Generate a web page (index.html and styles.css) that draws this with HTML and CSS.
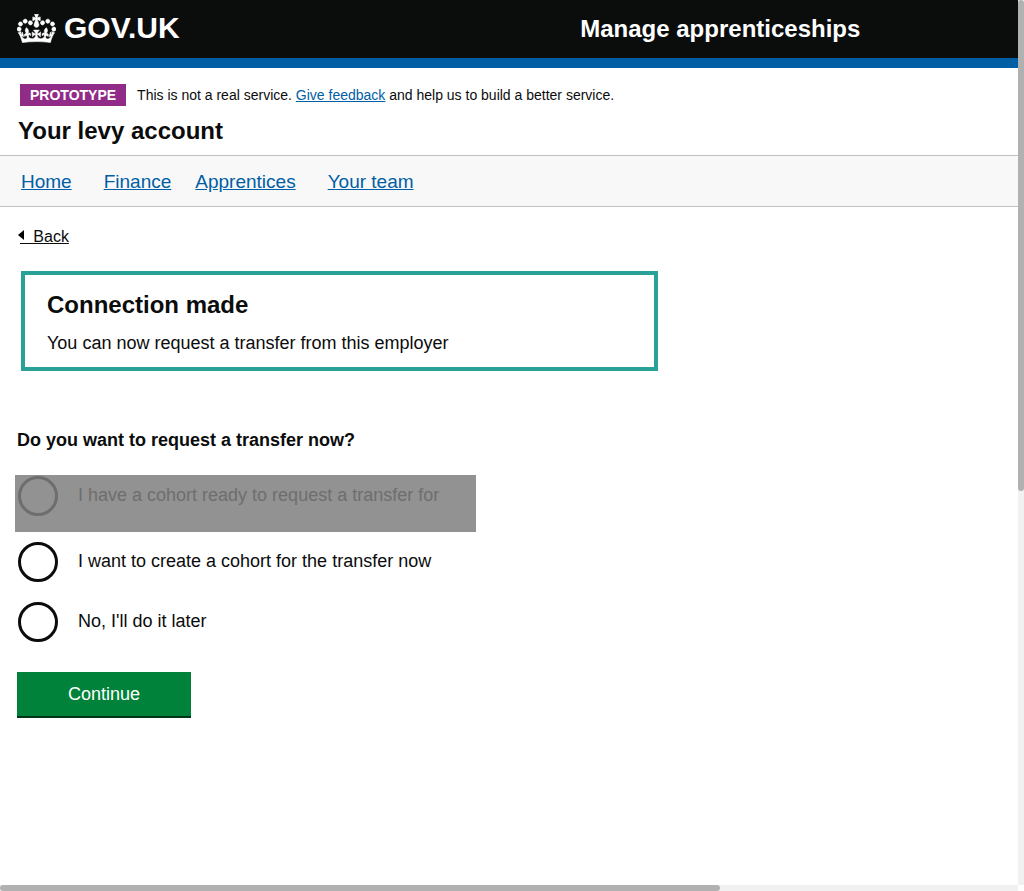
FILE: index.html
```html
<!DOCTYPE html>
<html lang="en">
<head>
<meta charset="utf-8">
<meta name="viewport" content="width=device-width, initial-scale=1">
<title>Connection made - Manage apprenticeships</title>
<link rel="stylesheet" href="styles.css">
</head>
<body>
<header class="header">
  <a class="brand" href="#">
    <svg class="crown" viewBox="0 0 132 97" aria-hidden="true"><path fill="currentColor" stroke="currentColor" stroke-width="2" d="M25 30.2c3.500 1.500 7.700-.2 9.100-3.700 1.500-3.600-.2-7.800-3.900-9.200-3.600-1.400-7.600.3-9.100 3.900-1.400 3.500.3 7.500 3.900 9zM9 39.500c3.600 1.500 7.800-.2 9.200-3.700 1.500-3.600-.2-7.800-3.900-9.100-3.600-1.500-7.600.2-9.100 3.800-1.400 3.500.3 7.500 3.800 9zM4.400 57.200c3.500 1.500 7.700-.2 9.100-3.800 1.500-3.600-.2-7.700-3.900-9.100-3.500-1.500-7.600.3-9.100 3.800-1.400 3.500.3 7.600 3.900 9.100zm38.300-21.400c3.500 1.500 7.700-.2 9.100-3.800 1.500-3.600-.2-7.700-3.900-9.100-3.600-1.500-7.600.3-9.100 3.800-1.300 3.600.4 7.700 3.900 9.100zm64.400-5.600c-3.600 1.500-7.800-.2-9.100-3.700-1.500-3.600.2-7.800 3.800-9.200 3.600-1.400 7.700.3 9.200 3.900 1.300 3.500-.4 7.500-3.900 9zm15.900 9.300c-3.600 1.500-7.700-.2-9.100-3.700-1.500-3.600.2-7.800 3.700-9.100 3.600-1.500 7.700.2 9.200 3.800 1.500 3.500-.3 7.500-3.800 9zm4.700 17.700c-3.600 1.500-7.800-.2-9.200-3.800-1.500-3.600.2-7.700 3.900-9.100 3.600-1.500 7.700.3 9.200 3.800 1.300 3.500-.4 7.600-3.900 9.100zM89.300 35.800c-3.600 1.500-7.800-.2-9.200-3.800-1.400-3.600.2-7.700 3.900-9.100 3.600-1.500 7.700.3 9.200 3.800 1.400 3.600-.3 7.700-3.900 9.100zM69.700 17.700l8.900 4.700V9.300l-8.900 2.800c-.2-.3-.5-.6-.9-.9L72.400 0H59.600l3.500 11.200c-.3.3-.6.5-.9.9l-8.800-2.800v13.100l8.800-4.700c.3.3.6.7.9.9l-5 15.400v.1c-.2.8-.4 1.600-.4 2.400 0 4.100 3.100 7.500 7 8.100h.2c.3 0 .7.1 1 .1.4 0 .7 0 1-.1h.2c4-.6 7.100-4.100 7.100-8.100 0-.8-.1-1.700-.4-2.400V34l-5.100-15.400c.4-.2.7-.6 1-.9zM66 92.800c16.900 0 32.800 1.100 47.100 3.200 4-16.900 8.900-26.700 14-33.500l-9.600-3.400c1 4.900 1.100 7.200 0 10.200-1.500-1.400-3-4.300-4.200-8.700L108.600 76c2.800-2 5-3.200 7.500-3.300-4.400 9.400-10 11.900-13.600 11.200-4.300-.8-6.300-4.600-5.600-7.900 1-4.700 5.700-5.900 8-.5 4.300-8.700-3-11.400-7.600-8.800 7.100-7.200 7.900-13.500 2.100-21.100-8 6.100-8.100 12.300-4.500 20.800-4.700-5.400-12.100-2.500-9.500 6.200 3.400-5.200 7.900-2 7.200 3.100-.6 4.300-6.400 7.800-13.500 7.200-10.300-.9-10.900-8-11.200-13.800 2.500-.5 7.100 1.800 11 7.300L80.200 60c-4.100 4.400-8 5.300-12.300 5.400 1.400-4.400 8-11.600 8-11.600H55.500s6.400 7.200 7.900 11.600c-4.200-.1-8-1-12.300-5.400l1.400 16.400c3.900-5.500 8.500-7.700 10.900-7.300-.3 5.800-.9 12.800-11.100 13.800-7.200.6-12.900-2.900-13.500-7.200-.7-5 3.800-8.300 7.100-3.100 2.700-8.700-4.600-11.600-9.400-6.200 3.700-8.500 3.600-14.700-4.600-20.800-5.800 7.600-5 13.900 2.200 21.100-4.700-2.600-11.900.1-7.700 8.800 2.300-5.500 7.100-4.200 8.100.5.700 3.300-1.300 7.100-5.700 7.900-3.500.7-9-1.800-13.500-11.200 2.500.1 4.700 1.300 7.500 3.300l-4.700-15.400c-1.200 4.400-2.700 7.200-4.300 8.700-1.100-3-.9-5.300 0-10.200l-9.500 3.400c5 6.900 9.900 16.700 14 33.500 14.800-2.100 30.800-3.200 47.700-3.200z"/></svg>
    <span>GOV.UK</span>
  </a>
  <span class="service">Manage apprenticeships</span>
</header>

<div class="intro">
  <div class="phase">
    <strong class="tag">PROTOTYPE</strong>
    <span>This is not a real service. <a class="link" href="#">Give feedback</a> and help us to build a better service.</span>
  </div>
  <p class="account">Your levy account</p>
</div>

<nav class="nav" aria-label="Account">
  <a class="link nav-wide" href="#">Home</a>
  <a class="link" href="#">Finance</a>
  <a class="link nav-wide" href="#">Apprentices</a>
  <a class="link" href="#">Your team</a>
</nav>

<main class="main">
  <a class="back" href="#"><svg class="arrow" viewBox="0 0 6 10" aria-hidden="true"><path d="M6 0v10L0 5z"/></svg><span class="back-text">&nbsp;&nbsp;&nbsp;Back</span></a>

  <section class="notice">
    <h1 class="notice-title">Connection made</h1>
    <p class="notice-text">You can now request a transfer from this employer</p>
  </section>

  <form>
    <fieldset class="choices">
      <legend class="question">Do you want to request a transfer now?</legend>
      <div class="choice choice-disabled">
        <input class="radio" type="radio" name="transfer" id="ready" disabled>
        <label class="label" for="ready">I have a cohort ready to request a transfer for</label>
      </div>
      <div class="choice">
        <input class="radio" type="radio" name="transfer" id="create">
        <label class="label" for="create">I want to create a cohort for the transfer now</label>
      </div>
      <div class="choice">
        <input class="radio" type="radio" name="transfer" id="later">
        <label class="label" for="later">No, I'll do it later</label>
      </div>
    </fieldset>
    <button class="button" type="button">Continue</button>
  </form>
</main>

<div class="track track-y" aria-hidden="true"><div class="thumb thumb-y"></div></div>
<div class="track track-x" aria-hidden="true"><div class="thumb thumb-x"></div></div>
</body>
</html>
```
FILE: styles.css
```css
* {
  box-sizing: border-box;
}

body {
  margin: 0;
  padding: 0 6px 6px 0;
  background: #fff;
  color: #0b0c0c;
  font-family: "Liberation Sans", Arial, sans-serif;
  font-size: 18px;
  line-height: 24px;
}

.header {
  display: grid;
  grid-template-columns: 57% 1fr;
  align-items: end;
  padding: 12px 0;
  border-bottom: 10px solid #005ea5;
  background: #0b0c0c;
  color: #fff;
  font-weight: bold;
}

.brand {
  display: flex;
  align-items: center;
  gap: 8px;
  padding: 0 0 2px 17px;
  color: #fff;
  font-size: 30px;
  line-height: 32px;
  text-decoration: none;
}

.crown {
  width: 39px;
  height: 29px;
}

.service {
  font-size: 24px;
  line-height: 34px;
}

.intro {
  padding: 16px 18px 8px;
}

.phase {
  display: flex;
  flex-wrap: wrap;
  align-items: center;
  gap: 11px;
  padding-left: 2px;
  font-size: 14px;
  line-height: 22px;
}

.tag {
  padding: 0 10px;
  background: #912b88;
  color: #fff;
}

.link {
  color: #005ea5;
}

.account {
  margin: 9px 0 0;
  font-size: 24px;
  font-weight: bold;
  line-height: 32px;
}

.nav {
  display: flex;
  flex-wrap: wrap;
  gap: 24px;
  padding: 14px 21px 12px;
  border: solid #bfc1c3;
  border-width: 1px 0;
  background: #f8f8f8;
  font-size: 19px;
}

.nav-wide {
  margin-right: 8px;
}

.main {
  padding: 15px 17px;
}

.back {
  display: inline-flex;
  align-items: center;
  color: #0b0c0c;
  font-size: 16px;
  text-decoration: none;
}

.arrow {
  width: 6px;
  height: 10px;
  margin: 0 -4px 4px 1px;
}

.back-text {
  text-decoration: underline;
}

.notice {
  max-width: 637px;
  margin: 22px 0 57px 4px;
  padding: 14px 22px 12px;
  border: 4px solid #28a197;
}

.notice-title {
  margin: 0;
  font-size: 24px;
  line-height: 32px;
}

.notice-text {
  margin: 10px 0 0;
}

.choices {
  display: grid;
  margin: 0;
  padding: 0;
  border: 0;
}

.question {
  margin-bottom: 23px;
  padding: 0;
  font-weight: bold;
}

.choice {
  display: flex;
  gap: 20px;
  padding: 10px 0 10px 1px;
}

.choice-disabled {
  width: 461px;
  max-width: 100%;
  margin-left: -2px;
  padding: 1px 3px 16px;
  background: #929292;
  color: #6e6e6e;
}

.radio {
  appearance: none;
  flex: none;
  width: 40px;
  height: 40px;
  margin: 0;
  border: 3px solid currentColor;
  border-radius: 50%;
  color: inherit;
}

.label {
  padding-top: 7px;
}

.button {
  width: 174px;
  margin-top: 20px;
  padding: 10px;
  border: 0;
  border-bottom: 2px solid #003618;
  background: #00823b;
  color: #fff;
  font: inherit;
}

.track {
  position: fixed;
  background: #f1f1f1;
}

.track-y {
  top: 0;
  right: 0;
  bottom: 6px;
  width: 6px;
}

.track-x {
  right: 6px;
  bottom: 0;
  left: 0;
  height: 6px;
}

.thumb {
  border-radius: 3px;
  background: #b1b1b1;
}

.thumb-y {
  height: 55.5%;
}

.thumb-x {
  width: 70.7%;
  height: 100%;
}
```
